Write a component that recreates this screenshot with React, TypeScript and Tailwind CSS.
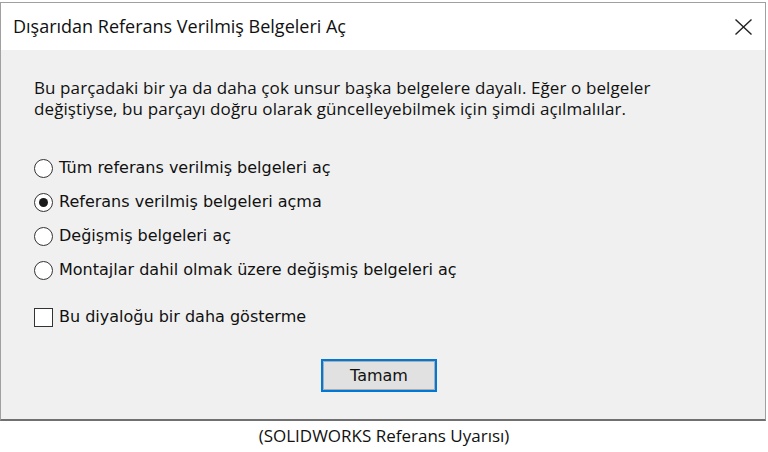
import React from "react";

const seg = { fontFamily: '"Open Sans", "Noto Sans", sans-serif' };
const tah = { fontFamily: '"DejaVu Sans", Verdana, sans-serif' };

function Radio({ checked, label }: { checked?: boolean; label: string }) {
  return (
    <div className="flex items-center h-[34px]">
      <div className="w-[19px] h-[19px] rounded-full border-[1.5px] border-[#333] bg-white flex items-center justify-center">
        {checked && <div className="w-[9px] h-[9px] rounded-full bg-[#1a1a1a]" />}
      </div>
      <span className="ml-[6px] text-[16px] text-[#111]" style={tah}>
        {label}
      </span>
    </div>
  );
}

export default function App() {
  return (
    <div className="w-[768px] h-[452px] bg-white overflow-hidden">
      <div className="mt-[2px] w-[766px] h-[419px] border-t border-l border-r border-[#a0a0a0] border-b-2 border-b-[#707070] flex flex-col">
        <div className="h-[47px] bg-white flex items-center justify-between pl-[12px] pr-[13px]">
          <span className="text-[18px] text-[#111]" style={seg}>
            Dışarıdan Referans Verilmiş Belgeleri Aç
          </span>
          <svg width="17" height="16" viewBox="0 0 17 16">
            <path d="M0.5 0.5 L16.5 15.5 M16.5 0.5 L0.5 15.5" stroke="#222" strokeWidth="1.4" />
          </svg>
        </div>
        <div className="flex-1 bg-[#f0f0f0] pl-[33px] flex flex-col">
          <div className="mt-[27px] text-[17px] leading-[21px] tracking-[0.1px] text-[#111]" style={seg}>
            <div>Bu parçadaki bir ya da daha çok unsur başka belgelere dayalı. Eğer o belgeler</div>
            <div>değiştiyse, bu parçayı doğru olarak güncelleyebilmek için şimdi açılmalılar.</div>
          </div>
          <div className="mt-[32px] flex flex-col">
            <Radio label="Tüm referans verilmiş belgeleri aç" />
            <Radio checked label="Referans verilmiş belgeleri açma" />
            <Radio label="Değişmiş belgeleri aç" />
            <Radio label="Montajlar dahil olmak üzere değişmiş belgeleri aç" />
          </div>
          <div className="mt-[20px] flex items-center h-[20px]">
            <div className="w-[19px] h-[19px] border-[1.5px] border-[#333] bg-white" />
            <span className="ml-[6px] text-[16px] text-[#111]" style={tah}>
              Bu diyaloğu bir daha gösterme
            </span>
          </div>
          <div className="mt-[32px] flex justify-center pr-[41px]">
            <div className="w-[116px] h-[33px] border-2 border-[#0078d7] flex">
              <div className="flex-1 border border-[#adadad] bg-[#e1e1e1] flex items-center justify-center">
                <span className="text-[16px] text-[#111]" style={tah}>Tamam</span>
              </div>
            </div>
          </div>
        </div>
      </div>
      <div className="text-center text-[17px] leading-[23px] text-[#111] mt-[3px]" style={seg}>
        (SOLIDWORKS Referans Uyarısı)
      </div>
    </div>
  );
}
